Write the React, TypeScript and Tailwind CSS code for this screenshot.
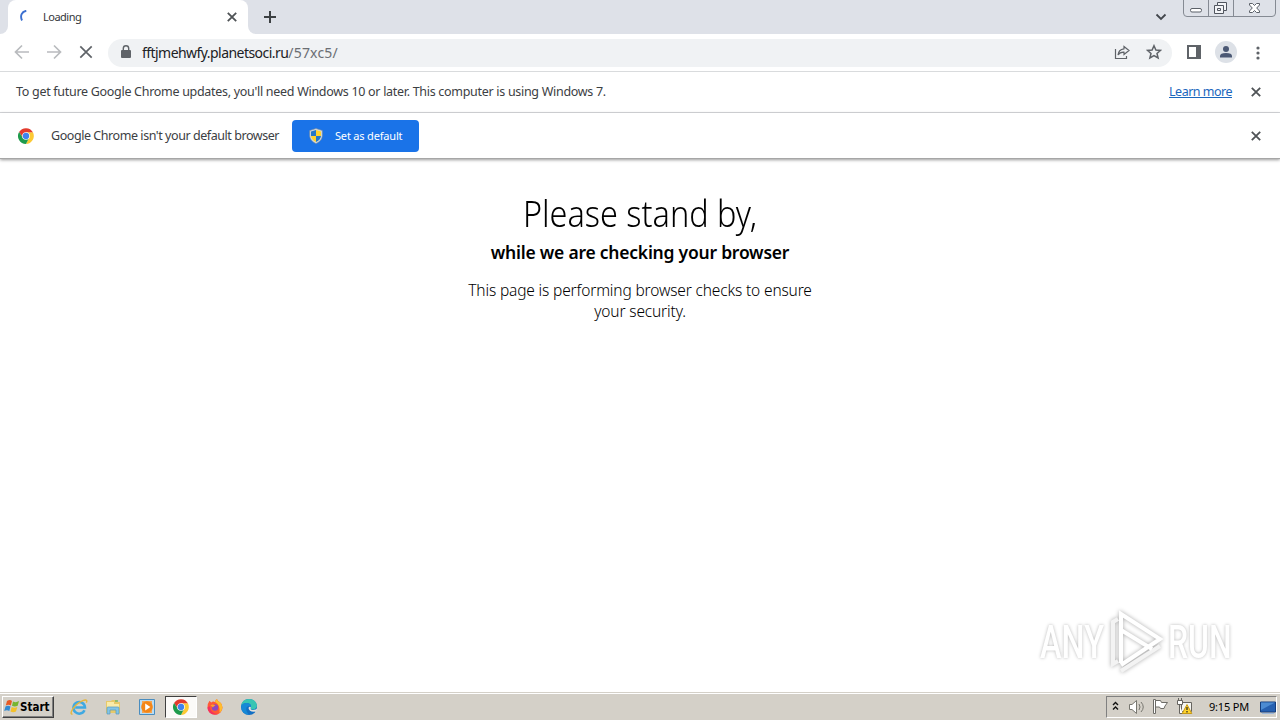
import type { ReactNode } from "react";

const quickLaunch = ["ie", "explorer", "player", "chrome", "firefox", "edge"] as const;

type AppName = (typeof quickLaunch)[number];

function ChromeIcon({ size = 16 }: { size?: number }) {
  return (
    <svg width={size} height={size} viewBox="0 0 48 48">
      <path d="M24 13H44.8A24 24 0 0 1 24 48L33.5 29.5Z" fill="#fcc934" />
      <path d="M3.2 12A24 24 0 0 1 44.8 13H24L14.5 29.5Z" fill="#e33b2e" />
      <path d="M3.2 12L14.5 29.5L33.5 29.5L24 48A24 24 0 0 1 3.2 12Z" fill="#1e9b4c" />
      <circle cx="24" cy="24" r="11.5" fill="#fff" />
      <circle cx="24" cy="24" r="9.5" fill="#3f82ee" />
    </svg>
  );
}

function ShieldIcon() {
  return (
    <svg width="14" height="16" viewBox="0 0 14 16">
      <path d="M7 .5L13.3 2.6V7.5C13.3 11.5 10 14.3 7 15.5C4 14.3.7 11.5.7 7.5V2.6Z" fill="#d5dce2" stroke="#7b8a99" strokeWidth=".6" />
      <path d="M7 2V8H2V3.5Z" fill="#2477c9" />
      <path d="M7 2V8H12V3.5Z" fill="#ffd22e" />
      <path d="M2 8H7V14C4.5 12.8 2.3 11 2 8Z" fill="#ffd22e" />
      <path d="M12 8H7V14C9.5 12.8 11.7 11 12 8Z" fill="#2477c9" />
    </svg>
  );
}

function CloseIcon({ size = 10 }: { size?: number }) {
  return (
    <svg width={size} height={size} viewBox="0 0 10 10" fill="none" stroke="#4f5356" strokeWidth="1.8">
      <path d="M.8 .8L9.2 9.2M9.2 .8L.8 9.2" />
    </svg>
  );
}

function AppIcon({ name }: { name: AppName }) {
  switch (name) {
    case "ie":
      return (
        <svg width="18" height="18" viewBox="0 0 18 18" fill="none">
          <path d="M14.5 12.2A5.8 5.8 0 1 1 15 9.6H5.2" stroke="#3fa9e2" strokeWidth="2.5" />
          <path d="M2.5 15.8C-.5 17 1.5 11.5 6 7C10 3 16.5 .5 16.8 3C16.9 3.5 16.7 4 16.3 4.7" stroke="#e6b63c" strokeWidth="1.4" />
        </svg>
      );
    case "explorer":
      return (
        <svg width="18" height="18" viewBox="0 0 18 18">
          <path d="M2 3H7L8 2H13V4H16V15H2Z" fill="#e7c969" />
          <path d="M3 4H10V6H15V11H3Z" fill="#f9eba9" />
          <path d="M11 3H14" stroke="#6bb56b" strokeWidth="1.4" />
          <path d="M3 16V10Q3 9 4 9H14Q15 9 15 10V16H12V12H6V16Z" fill="#83c5e6" stroke="#5798bc" strokeWidth=".7" />
        </svg>
      );
    case "player":
      return (
        <svg width="18" height="18" viewBox="0 0 18 18">
          <path d="M1.5 1.5H16.5V16.5H1.5Z" fill="#b9dcf3" stroke="#4a8dbf" />
          <path d="M4 3H14V15H4Z" fill="#f5a552" />
          <circle cx="9" cy="9" r="5.8" fill="#f48617" />
          <path d="M7.2 5.6V12.4L12.4 9Z" fill="#fff" />
        </svg>
      );
    case "chrome":
      return <ChromeIcon />;
    case "firefox":
      return (
        <svg width="18" height="18" viewBox="0 0 18 18">
          <path d="M3.5 2.7L5.2 4.5Q7 3 9 4Q9 2 11 1Q11.2 3.3 14 4.3Q16.5 6 16.5 9.5A7.5 7.3 0 0 1 1.5 9.5Q1.5 5 3.5 2.7Z" fill="#ff5a35" />
          <path d="M11 1Q11.2 3.3 14 4.3Q16.5 6 16.5 9.5Q16 13 13.5 14.8Q14.5 7 9 4Q9 2 11 1Z" fill="#ffbd2e" />
          <path d="M1.5 9.5A7.5 7.3 0 0 0 12 16Q5 16 3.5 8Z" fill="#f5305f" />
          <circle cx="9" cy="9.5" r="3.2" fill="#8d49c0" />
          <path d="M4.5 7.2Q7 5.5 9.5 7.5Q7.5 8 7 9.5Z" fill="#ff9d2e" />
        </svg>
      );
    case "edge":
      return (
        <svg width="18" height="18" viewBox="0 0 18 18">
          <circle cx="9" cy="9" r="8" fill="#126fc4" />
          <path d="M1.2 8Q2 1 9 1Q16.5 1.5 17 8Q16.5 12 12 11.5Q10 11 11 9.5Q11.5 5 6.5 5Q3 5 1.2 8Z" fill="#38c5b3" />
          <path d="M1.2 8Q3 4.5 7 5Q11.5 5.5 11 9.5Q9 6.5 6.5 9.5Q5.5 13.5 9 16.8Q1 16 1.2 8Z" fill="#1689d6" />
          <path d="M11 9.5Q10 11.5 12 12Q14.5 12.5 17.2 10.5L16.3 13.5Q9 14.5 8.5 10Q9.5 8 11 9.5Z" fill="#e4e1db" />
        </svg>
      );
  }
}

function WindowControls() {
  return (
    <svg width="93" height="18" viewBox="0 0 93 18" fill="none" className="mr-1 shrink-0">
      <path d="M.5 0V13Q.5 16.5 4 16.5H89Q92.5 16.5 92.5 13V0M25.5 0V16.5M50.5 0V16.5" stroke="#858a93" />
      <rect x="7.5" y="8.5" width="11" height="3.5" rx="1.5" fill="#fff" stroke="#5b6068" />
      <path d="M34.5 2.5H43.5V10.5H40.5V13.5H31.5V5.5H34.5ZM34.5 5.5H40.5V10.5M34.5 8.5H37.5V10.5H34.5Z" fill="#f3f4f7" stroke="#50555e" />
      <path d="M66.5 3.5H69.5L71.5 5.5L73.5 3.5H76.5V5L73.7 8L76.5 11V12.5H73.5L71.5 10.5L69.5 12.5H66.5V11L69.3 8L66.5 5Z" fill="#fff" stroke="#5b6068" />
    </svg>
  );
}

function TabStrip() {
  return (
    <div className="flex h-[34px] bg-[#dee1e8]">
      <div className="w-2 bg-white">
        <div className="h-full rounded-br-lg bg-[#dee1e8]" />
      </div>
      <div className="flex h-full w-[240px] items-center rounded-t-lg bg-white pl-3 pr-[11px]">
        <svg width="14" height="14" viewBox="0 0 14 14" fill="none">
          <path d="M2 10.5C-.2 6 1.8 1.5 6.3 .8" stroke="#3b6fd0" strokeWidth="1.9" />
        </svg>
        <span className="ml-[9px] flex-1 text-[11px] tracking-[-0.5px] text-[#34363a]">Loading</span>
        <CloseIcon />
      </div>
      <div className="w-2 bg-white">
        <div className="h-full rounded-bl-lg bg-[#dee1e8]" />
      </div>
      <div className="flex flex-1 items-center pl-[7px]">
        <svg width="14" height="14" viewBox="0 0 14 14" stroke="#3c4043" strokeWidth="2">
          <path d="M7 1V13M1 7H13" />
        </svg>
      </div>
      <svg width="12" height="8" viewBox="0 0 12 8" fill="none" stroke="#42464c" strokeWidth="1.8" className="mr-4 mt-[13px]">
        <path d="M1.5 1.5L6 6L10.5 1.5" />
      </svg>
      <WindowControls />
    </div>
  );
}

function Toolbar() {
  return (
    <div className="flex h-[38px] items-center border-b border-[#d9dbdd] bg-white pl-[14px] pr-[17px]">
      <svg width="80" height="16" viewBox="0 0 80 16" fill="none" strokeWidth="1.7" className="-mt-px">
        <path d="M15 8H2M8 1.5L1.5 8L8 14.5" stroke="#b9bbbe" />
        <path d="M33 8H46M40 1.5L46.5 8L40 14.5" stroke="#b9bbbe" />
        <path d="M66.3 2.3L77.7 13.7M77.7 2.3L66.3 13.7" stroke="#5f6368" />
      </svg>
      <div className="ml-[14px] flex h-7 w-[1064px] items-center rounded-full bg-[#f0f2f4] pl-[13px] pr-[10px]">
        <svg width="10" height="14" viewBox="0 0 10 14" fill="none" className="-mt-[2px]">
          <rect y="5" width="10" height="8" rx="1" fill="#5f6368" />
          <path d="M2.3 6V3.5A2.7 2.7 0 0 1 7.7 3.5V6" stroke="#5f6368" strokeWidth="1.4" />
        </svg>
        <span className="ml-[11px] flex-1 text-[14px] tracking-[-0.55px] text-[#202124]">
          fftjmehwfy.planetsoci.ru<span className="tracking-[0.2px] text-[#6b6e73]">/57xc5/</span>
        </span>
        <svg width="16" height="16" viewBox="0 0 16 16" fill="none" stroke="#5f6368" strokeWidth="1.2" className="-mt-px">
          <path d="M1.5 5V14.5H12.5V12M10 2.5L15 6.5L10 10.5V8.2Q6 8 4 11Q4.5 5.5 10 4.8Z" />
        </svg>
        <svg width="16" height="16" viewBox="0 0 16 16" fill="none" stroke="#5f6368" strokeWidth="1.5" className="-mt-px ml-4">
          <path d="M8 1.7L9.9 6L14.5 6.4L11 9.5L12.1 14L8 11.6L3.9 14L5 9.5L1.5 6.4L6.1 6Z" />
        </svg>
      </div>
      <svg width="14" height="14" viewBox="0 0 14 14" className="-mt-px ml-[15px]">
        <path d="M1 1H13V13H1Z" fill="none" stroke="#5f6368" strokeWidth="2" />
        <path d="M9 1H13V13H9Z" fill="#5f6368" />
      </svg>
      <svg width="22" height="22" viewBox="0 0 22 22" className="-mt-px ml-[14px]">
        <circle cx="11" cy="11" r="11" fill="#dde1e7" />
        <circle cx="11" cy="8" r="3" fill="#4b5874" />
        <path d="M5 16.5V15Q5 12 11 12Q17 12 17 15V16.5Z" fill="#4b5874" />
      </svg>
      <svg width="4" height="16" viewBox="0 0 4 16" fill="#5f6368" className="ml-[19px]">
        <circle cx="2" cy="3" r="1.6" />
        <circle cx="2" cy="8" r="1.6" />
        <circle cx="2" cy="13" r="1.6" />
      </svg>
    </div>
  );
}

function InfoBar({ className, children }: { className: string; children: ReactNode }) {
  return (
    <div className={`flex items-center bg-white pl-4 pr-[19px] text-[12.5px] text-[#3c4043] ${className}`}>
      {children}
      <CloseIcon />
    </div>
  );
}

function Watermark() {
  return (
    <div className="absolute bottom-[15px] right-[44px] flex items-center font-['Roboto',sans-serif] text-[47px] font-medium text-white">
      <span className="w-[94px] origin-right scale-x-[0.69] text-right [text-shadow:0_0_4px_#b5b5b5]">ANY</span>
      <svg width="57" height="66" viewBox="0 0 57 66" fill="none" strokeWidth="4" className="ml-[3px] overflow-visible drop-shadow-[0_0_2px_#aaa]">
        <path d="M11 10L6 13V55L11 52M14 62L53 37" stroke="#f3f3f3" />
        <path d="M14 54V5L53 30L14 56M14 21L45 40" stroke="#fff" />
      </svg>
      <span className="ml-[4px] w-[68px] origin-left scale-x-[0.68] [text-shadow:0_0_4px_#b5b5b5]">RUN</span>
    </div>
  );
}

function Tray() {
  return (
    <div className="flex h-[22px] w-[171px] items-center border border-b-white border-l-[#808080] border-r-white border-t-[#808080] pl-[5px]">
      <svg width="7" height="10" viewBox="0 0 7 10" fill="none" stroke="#111" strokeWidth="1.4" className="-mt-[2px]">
        <path d="M1 4L3.5 1.5L6 4M1 8.5L3.5 6L6 8.5" />
      </svg>
      <svg width="18" height="16" viewBox="0 0 18 16" fill="none" stroke="#77766f" className="ml-[9px]">
        <path d="M1.5 5.5H4L8.5 1.5V14.5L4 10.5H1.5Z" fill="#fff" />
        <path d="M11 5Q13 8 11 11M13 3Q17.5 8 13 13" />
      </svg>
      <svg width="17" height="17" viewBox="0 0 17 17" fill="none" stroke="#6d6c67" className="ml-[6px]">
        <path d="M1.5 1.5H3.5V15.5H1.5Z" fill="#fff" />
        <path d="M3.5 2.5H8.5L9.5 4.5H15.5L13 8L12 10.5H8.5L7.5 9H3.5Z" fill="#fff" />
      </svg>
      <svg width="17" height="17" viewBox="0 0 17 17" fill="none" stroke="#66645f" className="ml-[7px]">
        <path d="M5.5 4.5H15.5V13.5H5.5Z" fill="#f5f5f2" />
        <path d="M1.5 2.5H6.5V6.5H1.5ZM2.5 0V2M5.5 0V2M3.5 7V15.5H7" fill="#fff" />
        <path d="M11 6.5L15.8 15.5H6.2Z" fill="#ffd42d" stroke="#c59816" />
        <path d="M11 9V12M11 13V14.5" stroke="#222" strokeWidth="1.2" />
      </svg>
      <span className="ml-4 flex-1 whitespace-nowrap pt-px text-[11px] tracking-[-0.2px] text-black">9:15 PM</span>
      <svg width="16" height="14" viewBox="0 0 16 14" className="mt-[2px]">
        <path d="M.5 1H15.5V11H.5Z" fill="#2660b0" stroke="#143d7c" />
        <path d="M1 1.5H15L1 9Z" fill="#4c8bd2" />
        <path d="M2 12.5H14" stroke="#9eb9d9" />
      </svg>
    </div>
  );
}

function Taskbar() {
  return (
    <div className="flex h-7 items-center border-t border-[#d4d0c8] bg-[#d4d0c8] pl-[2px] pr-[3px] shadow-[inset_0_1px_#fff]">
      <div className="flex h-[22px] w-[52px] items-center border border-b-[#404040] border-l-white border-r-[#404040] border-t-white pl-px shadow-[inset_-1px_-1px_#808080]">
        <svg width="16" height="15" viewBox="0 0 16 15" className="shrink-0">
          <path d="M3 2Q6 0 8 2L6.8 6.5Q4.5 5 1.8 6.5Z" fill="#e75a25" />
          <path d="M9 2.5Q12 4 15 2L13.7 6.7Q11 8 8 6.8Z" fill="#77b532" />
          <path d="M1.5 7.5Q4 6 6.5 7.5L5.3 12Q3 10.5 .2 12Z" fill="#328ad2" />
          <path d="M7.7 8Q10.5 9.5 13.3 8L12 12.5Q9 14 6.5 12.5Z" fill="#f4c12b" />
        </svg>
        <span className="pt-[2px] font-['DejaVu_Sans_Condensed','DejaVu_Sans',sans-serif] text-[11.5px] font-bold text-black">
          Start
        </span>
      </div>
      <div className="ml-2 flex flex-1">
        {quickLaunch.map((name) => (
          <div
            key={name}
            className={`mx-px flex h-[22px] w-8 items-center justify-center ${
              name === "chrome" ? "border border-b-white border-l-[#404040] border-r-white border-t-[#404040] bg-[#fbfaf8]" : ""
            }`}
          >
            <AppIcon name={name} />
          </div>
        ))}
      </div>
      <Tray />
    </div>
  );
}

export default function App() {
  return (
    <div className="flex h-[720px] w-[1280px] flex-col overflow-hidden bg-white font-['Noto_Sans',sans-serif]">
      <TabStrip />
      <Toolbar />
      <InfoBar className="h-[41px] border-b border-[#d5d7da]">
        <span className="flex-1 tracking-[-0.295px]">
          To get future Google Chrome updates, you'll need Windows 10 or later. This computer is using Windows 7.
        </span>
        <a className="mr-[19px] tracking-[-0.5px] text-[#1a66bd] underline">Learn more</a>
      </InfoBar>
      <InfoBar className="h-[46px] border-b border-[#a6a6a6] pt-px shadow-[0_1px_3px_#999]">
        <span className="ml-[2px]">
          <ChromeIcon />
        </span>
        <span className="ml-[17px] w-[241px] whitespace-nowrap tracking-[-0.44px]">
          Google Chrome isn't your default browser
        </span>
        <button className="flex h-8 w-[127px] items-center rounded bg-[#1a73e8] pl-[17px] text-[11px] text-white">
          <ShieldIcon />
          <span className="ml-3 tracking-[-0.18px]">Set as default</span>
        </button>
        <span className="flex-1" />
      </InfoBar>
      <main className="relative flex-1 pt-[31px] text-center text-black">
        <h1 className="scale-x-[0.9] text-[36px] font-light leading-[48px]">Please stand by,</h1>
        <h2 className="mt-px text-[17.5px] font-semibold leading-[26px] tracking-[-0.23px]">
          while we are checking your browser
        </h2>
        <p className="mx-auto mt-[15px] w-[360px] text-[15.5px] font-light leading-[21px] tracking-[-0.15px]">
          This page is performing browser checks to ensure your security.
        </p>
        <Watermark />
      </main>
      <Taskbar />
    </div>
  );
}
